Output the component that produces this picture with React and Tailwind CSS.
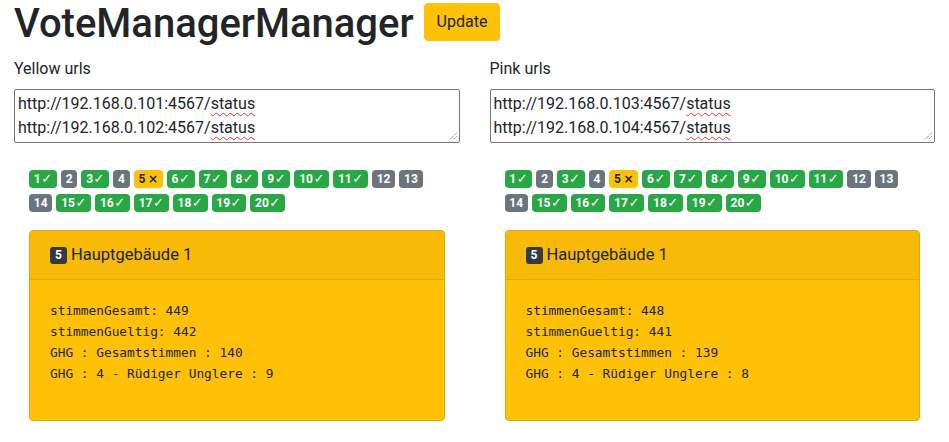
import React from "react";

const font = { fontFamily: "Roboto, 'Noto Sans', 'DejaVu Sans', sans-serif" };

function Badge({ n, state }) {
  const cls =
    state === "ok"
      ? "bg-[#28a745] text-white"
      : state === "err"
      ? "bg-[#ffc107] text-[#212529]"
      : "bg-[#6c757d] text-white";
  return (
    <span
      className={`inline-flex items-center h-[18px] px-[4.8px] rounded-[4px] text-[12px] leading-[18px] font-bold whitespace-pre ${cls}`}
    >
      {n}
      {state === "ok" && (
        <span className="ml-[0.5px] text-[13px] font-normal" style={{ fontFamily: "'DejaVu Sans', sans-serif" }}>
          ✓
        </span>
      )}
      {state === "err" && (
        <span className="ml-[2.5px] text-[12px] font-bold" style={{ fontFamily: "'DejaVu Sans', sans-serif" }}>
          ×
        </span>
      )}
    </span>
  );
}

const states = [
  "ok", "off", "ok", "off", "err", "ok", "ok", "ok", "ok", "ok",
  "ok", "off", "off", "off", "ok", "ok", "ok", "ok", "ok", "ok",
];

function Column({ label, urls, data }) {
  return (
    <div className="flex flex-col w-[446px]">
      <div className="text-[16px] leading-6 mt-[1px] mb-2">{label}</div>
      <div className="relative h-[54px] border border-[#767676] rounded-[2px] px-[3px] py-[2px] text-[16px] leading-6">
        {urls.map((u) => (
          <div key={u} className="whitespace-pre">
            {u.replace("status", "")}
            <span className="underline decoration-wavy decoration-[#e33] decoration-1 underline-offset-[3px]">
              status
            </span>
          </div>
        ))}
        <svg
          className="absolute right-[2px] bottom-[2px]"
          width="8"
          height="8"
          viewBox="0 0 8 8"
        >
          <path d="M7.5 1 L1 7.5 M7.5 4.5 L4.5 7.5" stroke="#555" strokeWidth="1" strokeDasharray="1 1" />
        </svg>
      </div>
      <div className="mt-[27px] px-[15px] flex flex-wrap gap-x-[4px] gap-y-[6px]">
        {states.map((s, i) => (
          <Badge key={i} n={i + 1} state={s} />
        ))}
      </div>
      <div className="mx-[15px] mt-[18px] border border-[#dfa906] rounded-[4px] bg-[#ffc107] overflow-hidden">
        <div className="px-5 py-3 bg-[#f7bb07] border-b border-[#dfa906] flex items-center">
          <span className="inline-flex items-center justify-center w-[17px] h-[17px] rounded-[3px] bg-[#343a40] text-white text-[12px] font-bold mr-[4px]">
            5
          </span>
          <span className="text-[16.5px] leading-6">Hauptgebäude 1</span>
        </div>
        <div className="px-5 pt-5 pb-5">
          <pre
            className="m-0 mb-4 text-[12.8px] leading-[21px] text-[#212529]"
            style={{ fontFamily: "'DejaVu Sans Mono', 'Liberation Mono', monospace" }}
          >
            {data.join("\n")}
          </pre>
        </div>
      </div>
    </div>
  );
}

export default function App() {
  return (
    <div className="min-h-[442px] bg-white text-[#212529] px-[14px]" style={font}>
      <div className="flex items-start">
        <h1 className="text-[40px] leading-[48px] font-medium m-0">VoteManagerManager</h1>
        <button className="ml-[10px] mt-[3px] h-[38px] px-3 rounded-[4px] bg-[#ffc107] border border-[#ffc107] text-[16px] leading-6 text-[#212529]">
          Update
        </button>
      </div>
      <div className="flex gap-[30px] mt-[8px]">
        <Column
          label="Yellow urls"
          urls={["http://192.168.0.101:4567/status", "http://192.168.0.102:4567/status"]}
          data={[
            "stimmenGesamt: 449",
            "stimmenGueltig: 442",
            "GHG : Gesamtstimmen : 140",
            "GHG : 4 - Rüdiger Unglere : 9",
          ]}
        />
        <Column
          label="Pink urls"
          urls={["http://192.168.0.103:4567/status", "http://192.168.0.104:4567/status"]}
          data={[
            "stimmenGesamt: 448",
            "stimmenGueltig: 441",
            "GHG : Gesamtstimmen : 139",
            "GHG : 4 - Rüdiger Unglere : 8",
          ]}
        />
      </div>
    </div>
  );
}
